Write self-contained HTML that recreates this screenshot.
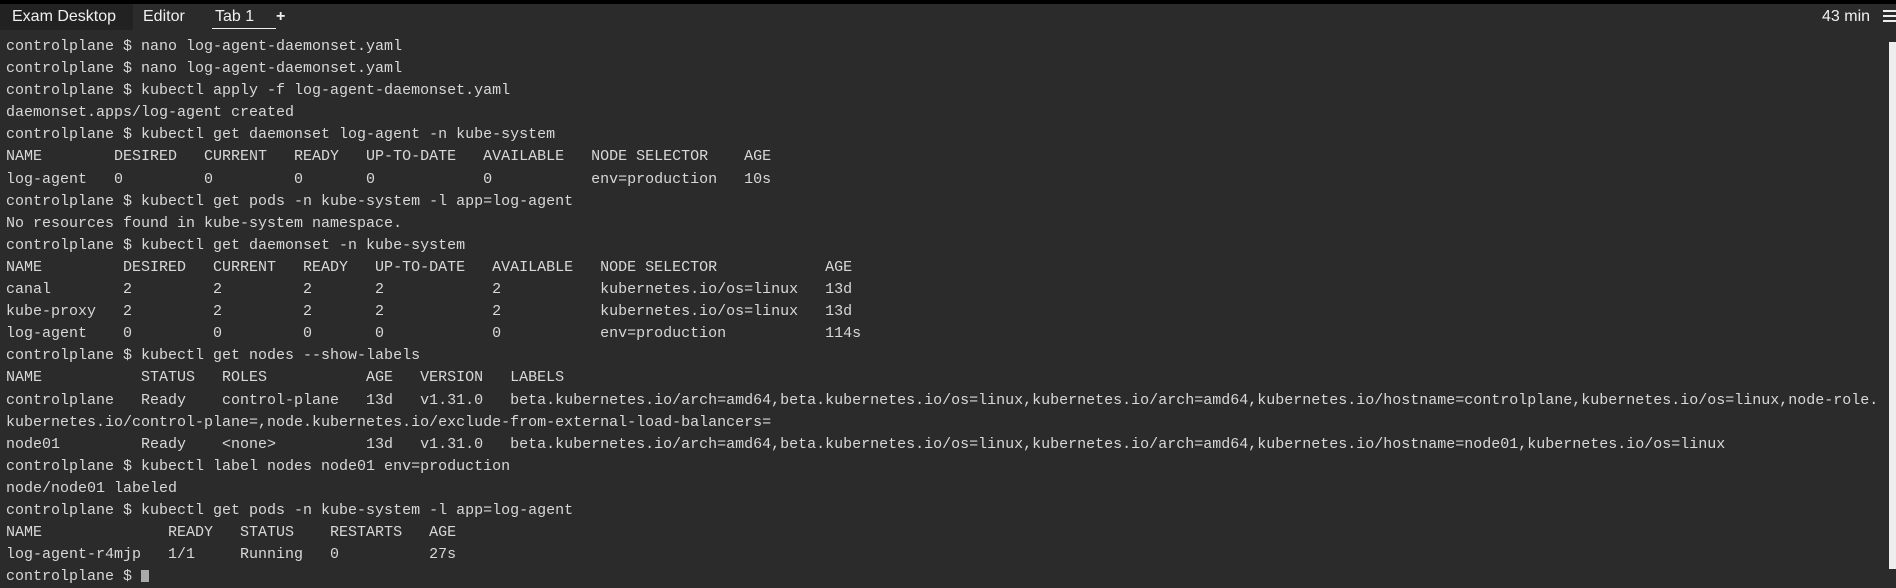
<!DOCTYPE html>
<html><head><meta charset="utf-8"><style>
html,body{margin:0;padding:0;background:#2b2b2b;width:1896px;height:569px;overflow:hidden}
.top{position:absolute;left:0;top:0;width:1896px;height:4px;background:#000}
.tabs{position:absolute;top:4px;left:0;height:26px;width:1896px;font-family:"Liberation Sans",sans-serif;font-size:16px;color:#f0f0f0}
.tabs span{position:absolute;top:4px}
.ex{position:absolute;left:0;top:0;width:133px;height:26px;background:#222}
.ul{position:absolute;left:212px;top:24px;width:64px;height:1px;background:#eee}
.term{position:absolute;left:6px;top:36px;font-family:"Liberation Mono",monospace;font-size:15px;line-height:22.1px;color:#d8d8d8;white-space:pre}
.sb{position:absolute;left:1889px;top:42px;width:7px;height:527px;background:#eee}
.cur{display:inline-block;width:8px;height:12px;background:#aaa;vertical-align:-2px}
</style></head><body>
<div class="top"></div>
<div class="tabs"><div class="ex"></div><span style="left:12px">Exam Desktop</span><span style="left:143px">Editor</span><span style="left:215px">Tab 1</span><div class="ul"></div><span style="left:276px;font-weight:bold">+</span><span style="left:1822px">43 min</span>
<div style="position:absolute;left:1883px;top:6px;width:13px;height:2px;background:#eee"></div>
<div style="position:absolute;left:1883px;top:11px;width:13px;height:2px;background:#eee"></div>
<div style="position:absolute;left:1883px;top:16px;width:13px;height:2px;background:#eee"></div></div>
<div class="sb"></div>
<div class="term">controlplane $ nano log-agent-daemonset.yaml
controlplane $ nano log-agent-daemonset.yaml
controlplane $ kubectl apply -f log-agent-daemonset.yaml
daemonset.apps/log-agent created
controlplane $ kubectl get daemonset log-agent -n kube-system
NAME        DESIRED   CURRENT   READY   UP-TO-DATE   AVAILABLE   NODE SELECTOR    AGE
log-agent   0         0         0       0            0           env=production   10s
controlplane $ kubectl get pods -n kube-system -l app=log-agent
No resources found in kube-system namespace.
controlplane $ kubectl get daemonset -n kube-system
NAME         DESIRED   CURRENT   READY   UP-TO-DATE   AVAILABLE   NODE SELECTOR            AGE
canal        2         2         2       2            2           kubernetes.io/os=linux   13d
kube-proxy   2         2         2       2            2           kubernetes.io/os=linux   13d
log-agent    0         0         0       0            0           env=production           114s
controlplane $ kubectl get nodes --show-labels
NAME           STATUS   ROLES           AGE   VERSION   LABELS
controlplane   Ready    control-plane   13d   v1.31.0   beta.kubernetes.io/arch=amd64,beta.kubernetes.io/os=linux,kubernetes.io/arch=amd64,kubernetes.io/hostname=controlplane,kubernetes.io/os=linux,node-role.
kubernetes.io/control-plane=,node.kubernetes.io/exclude-from-external-load-balancers=
node01         Ready    &lt;none&gt;          13d   v1.31.0   beta.kubernetes.io/arch=amd64,beta.kubernetes.io/os=linux,kubernetes.io/arch=amd64,kubernetes.io/hostname=node01,kubernetes.io/os=linux
controlplane $ kubectl label nodes node01 env=production
node/node01 labeled
controlplane $ kubectl get pods -n kube-system -l app=log-agent
NAME              READY   STATUS    RESTARTS   AGE
log-agent-r4mjp   1/1     Running   0          27s
controlplane $ <span class="cur"></span></div>
</body></html>
